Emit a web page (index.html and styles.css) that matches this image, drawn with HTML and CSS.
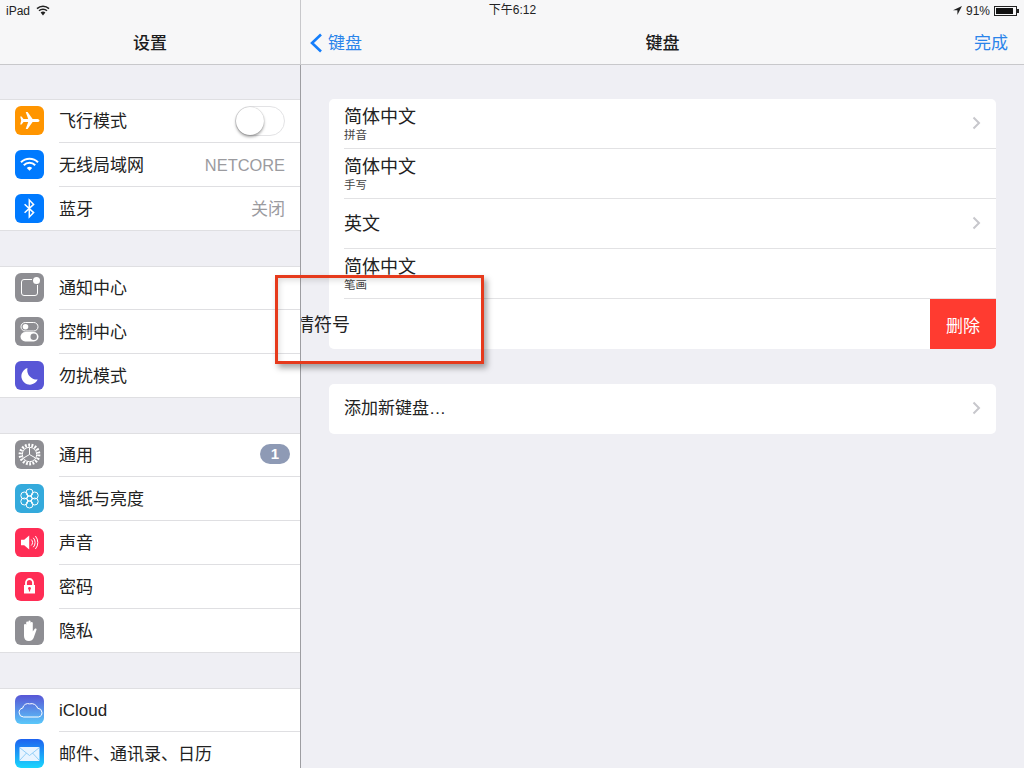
FILE: index.html
```html
<!DOCTYPE html>
<html lang="zh-CN">
<head>
<meta charset="utf-8">
<title>键盘</title>
<link rel="stylesheet" href="styles.css">
</head>
<body>
<div class="ipad">
  <div class="status">
    <div class="status-left">iPad
      <svg class="st-wifi" width="14" height="11" viewBox="0 0 14 11"><path d="M1 3.600a8.600 8.600 0 0 1 12 0M3 5.800a5.700 5.700 0 0 1 8 0" fill="none" stroke="#222" stroke-width="1.500"/><path d="M4.600 7.600a3.400 3.400 0 0 1 4.800 0L7 10.400z" fill="#222"/></svg>
    </div>
    <div class="status-time">下午6:12</div>
    <div class="status-right">
      <svg width="9" height="9" viewBox="0 0 9 9"><path d="M9 0 0 4.300h4.400V9z" fill="#222"/></svg>
      <span>91%</span>
      <span class="battery"><span class="battery-fill"></span></span>
      <span class="battery-tip"></span>
    </div>
  </div>

  <aside class="sidebar">
    <header class="bar side-bar"><h1 class="bar-title">设置</h1></header>
    <div class="side-scroll">
      <section class="group">
        <div class="row">
          <span class="icon c-orange"><svg viewBox="0 0 29 29"><path d="M24.500 14.500c0-1-1.200-1.600-2.600-1.600h-4.300L12.600 6h-1.900l2.500 6.900H8.500L6.600 10.600H5.200l1 3.900-1 3.900h1.400l1.900-2.300h4.700l-2.500 6.900h1.900l5-6.900h4.300c1.400 0 2.600-.6 2.600-1.600z" fill="#fff"/></svg></span>
          <span class="label">飞行模式</span>
          <span class="switch"><span class="knob"></span></span>
        </div>
        <div class="row">
          <span class="icon c-blue"><svg viewBox="0 0 29 29"><path d="M6 12.200a12 12 0 0 1 17 0M8.800 15.200a8 8 0 0 1 11.400 0" fill="none" stroke="#fff" stroke-width="2"/><path d="M11.800 18a4 4 0 0 1 5.400 0l-2.700 2.800z" fill="#fff"/></svg></span>
          <span class="label">无线局域网</span>
          <span class="value value-latin">NETCORE</span>
        </div>
        <div class="row">
          <span class="icon c-blue"><svg viewBox="0 0 29 29"><path d="M9.600 10.200 18.600 18.600 14.300 23V6l4.300 4.400-9 8.400" fill="none" stroke="#fff" stroke-width="1.500"/></svg></span>
          <span class="label">蓝牙</span>
          <span class="value value-cjk">关闭</span>
        </div>
      </section>

      <section class="group">
        <div class="row">
          <span class="icon c-gray"><svg viewBox="0 0 29 29"><path d="M17 6.500H9A2.500 2.500 0 0 0 6.500 9v11A2.500 2.500 0 0 0 9 22.500h11a2.500 2.500 0 0 0 2.500-2.500v-8" fill="none" stroke="#fff" stroke-width="1"/><circle cx="21.500" cy="7.500" r="3.500" fill="#fff"/></svg></span>
          <span class="label">通知中心</span>
        </div>
        <div class="row">
          <span class="icon c-gray"><svg viewBox="0 0 29 29"><rect x="6" y="5.500" width="17" height="8.500" rx="4.250" fill="none" stroke="#fff" stroke-width="1"/><circle cx="10.500" cy="9.750" r="2.800" fill="#fff"/><rect x="5.500" y="15" width="18" height="9.500" rx="4.750" fill="#fff"/><circle cx="18.700" cy="19.750" r="3.200" fill="#8e8e93"/></svg></span>
          <span class="label">控制中心</span>
        </div>
        <div class="row">
          <span class="icon c-purple"><svg viewBox="0 0 29 29"><path d="M12.500 7a8.500 8.500 0 1 0 10.200 11.500A9.500 9.500 0 0 1 12.500 7z" fill="#fff"/></svg></span>
          <span class="label">勿扰模式</span>
        </div>
      </section>

      <section class="group">
        <div class="row">
          <span class="icon c-gray"><svg viewBox="0 0 29 29"><circle cx="14.500" cy="14.500" r="9.300" fill="none" stroke="#fff" stroke-width="3.200" stroke-dasharray="1.800 1.450"/><circle cx="14.500" cy="14.500" r="7.200" fill="none" stroke="#fff" stroke-width="1"/><path d="M14.500 14.500V7.500M14.500 14.500 8.500 18M14.500 14.500 20.500 18" stroke="#fff" stroke-width="1" fill="none"/></svg></span>
          <span class="label">通用</span>
          <span class="badge">1</span>
        </div>
        <div class="row">
          <span class="icon c-teal"><svg viewBox="0 0 29 29"><g fill="none" stroke="#fff" stroke-width="1"><circle cx="14.500" cy="8.500" r="3.500"/><circle cx="14.500" cy="20.500" r="3.500"/><circle cx="9.300" cy="11.500" r="3.500"/><circle cx="19.700" cy="17.500" r="3.500"/><circle cx="9.300" cy="17.500" r="3.500"/><circle cx="19.700" cy="11.500" r="3.500"/><circle cx="14.500" cy="14.500" r="2.500"/></g></svg></span>
          <span class="label">墙纸与亮度</span>
        </div>
        <div class="row">
          <span class="icon c-pink"><svg viewBox="0 0 29 29"><path d="M6 11.800h3.200l5-4.300v14l-5-4.300H6z" fill="#fff"/><path d="M16.200 11.500a4 4 0 0 1 0 6M18.300 9.800a7 7 0 0 1 0 9.400M20.400 8a10 10 0 0 1 0 13" fill="none" stroke="#fff" stroke-width="1"/></svg></span>
          <span class="label">声音</span>
        </div>
        <div class="row">
          <span class="icon c-pink"><svg viewBox="0 0 29 29"><path d="M11 13V10.500a3.500 3.500 0 0 1 7 0V13" fill="none" stroke="#fff" stroke-width="1.800"/><path d="M9 13h11v8.500H9z" fill="#fff"/><circle cx="14.500" cy="16.500" r="1.400" fill="#ff2d55"/><path d="M13.900 17h1.200v2.500h-1.200z" fill="#ff2d55"/></svg></span>
          <span class="label">密码</span>
        </div>
        <div class="row">
          <span class="icon c-gray"><svg viewBox="0 0 29 29"><path d="M9 15.500V9a1.100 1.100 0 0 1 2.200 0v4.500V6.500a1.100 1.100 0 0 1 2.200 0v7V5.500a1.100 1.100 0 0 1 2.200 0v8V7a1.100 1.100 0 0 1 2.200 0v8.500l1.800-2.600c.8-1.100 2.500-.3 1.900.9L18.600 22c-.9 2-2.400 3-4.600 3-3.300 0-5-2-5-5z" fill="#fff"/></svg></span>
          <span class="label">隐私</span>
        </div>
      </section>

      <section class="group">
        <div class="row">
          <span class="icon c-cloud"><svg viewBox="0 0 29 29"><path d="M8.500 22a4.500 4.500 0 0 1-.8-8.900 5.300 5.300 0 0 1 7-4.200 6.400 6.400 0 0 1 8 4.400 4.400 4.400 0 0 1 .8 8.700z" fill="none" stroke="#fff" stroke-width="1"/></svg></span>
          <span class="label">iCloud</span>
        </div>
        <div class="row">
          <span class="icon c-mail"><svg viewBox="0 0 29 29"><rect x="4.500" y="8" width="20" height="14" rx="1" fill="#e8f4ff"/><path d="M4.500 8.500 14.500 16.500 24.500 8.500M4.500 21.500 11.500 14M24.500 21.500 17.500 14" fill="none" stroke="#7cc4f5" stroke-width="0.800"/></svg></span>
          <span class="label">邮件、通讯录、日历</span>
        </div>
      </section>
    </div>
  </aside>

  <main class="main">
    <header class="bar main-bar">
      <a class="back">
        <svg class="back-chev" width="14" height="20" viewBox="0 0 14 20"><path d="M12 1.500 3 10l9 8.500" fill="none" stroke="#147efb" stroke-width="2.600"/></svg>
        <span>键盘</span>
      </a>
      <h1 class="bar-title">键盘</h1>
      <a class="done">完成</a>
    </header>
    <div class="content">
      <section class="card">
        <div class="kb-row">
          <div class="kb-text"><div class="kb-name">简体中文</div><div class="kb-sub">拼音</div></div>
          <svg class="chev" width="9" height="14" viewBox="0 0 9 14"><path d="M1.500 1.500 7 7l-5.500 5.500" fill="none" stroke="#c7c7cc" stroke-width="2"/></svg>
        </div>
        <div class="kb-row">
          <div class="kb-text"><div class="kb-name">简体中文</div><div class="kb-sub">手写</div></div>
        </div>
        <div class="kb-row">
          <div class="kb-text"><div class="kb-name">英文</div></div>
          <svg class="chev" width="9" height="14" viewBox="0 0 9 14"><path d="M1.500 1.500 7 7l-5.500 5.500" fill="none" stroke="#c7c7cc" stroke-width="2"/></svg>
        </div>
        <div class="kb-row">
          <div class="kb-text"><div class="kb-name">简体中文</div><div class="kb-sub">笔画</div></div>
        </div>
        <div class="kb-row swiped">
          <div class="kb-name swiped-name">表情符号</div>
          <div class="delete">删除</div>
        </div>
      </section>
      <section class="card">
        <div class="kb-row add">
          <div class="add-label">添加新键盘…</div>
          <svg class="chev" width="9" height="14" viewBox="0 0 9 14"><path d="M1.500 1.500 7 7l-5.500 5.500" fill="none" stroke="#c7c7cc" stroke-width="2"/></svg>
        </div>
      </section>
    </div>
  </main>

  <div class="annotation"></div>
</div>
</body>
</html>
```
FILE: styles.css
```css
* { box-sizing: border-box; }
html, body { margin: 0; padding: 0; }
body {
  width: 1024px;
  height: 768px;
  overflow: hidden;
  font-family: "Liberation Sans", "Noto Sans CJK SC", sans-serif;
  color: #222;
  background: #efeff4;
}
.ipad {
  position: relative;
  display: flex;
  width: 1024px;
  height: 768px;
  overflow: hidden;
}
.status {
  position: absolute;
  top: 0;
  left: 0;
  right: 0;
  height: 20px;
  display: grid;
  grid-template-columns: 1fr auto 1fr;
  align-items: center;
  padding: 0 5px 0 6px;
  font-size: 12px;
  color: #222;
  z-index: 2;
}
.status-left { display: flex; align-items: center; gap: 6px; padding-top: 1px; }
.status-time { text-align: center; line-height: 16px; padding-bottom: 0; }
.status-right { display: flex; align-items: center; justify-content: flex-end; gap: 4px; padding-top: 1px; }
.battery {
  display: block;
  width: 23px;
  height: 10px;
  border: 1px solid #222;
  padding: 1px;
  margin-right: -4px;
}
.battery-fill { display: block; width: 92%; height: 100%; background: #111; }
.battery-tip { display: block; width: 2px; height: 4px; background: #222; }
.bar {
  height: 65px;
  flex: none;
  padding-top: 18px;
  background: #f7f7f8;
  border-bottom: 1px solid #c8c8cb;
  display: flex;
  align-items: center;
  justify-content: center;
}
.side-bar { border-right: 1px solid #c8c8cb; }
.bar-title {
  margin: 0;
  font-size: 17px;
  font-weight: 500;
  color: #1c1c1c;
}
.sidebar {
  width: 301px;
  flex: none;
  display: flex;
  flex-direction: column;
  background: #efeff4;
}
.side-scroll {
  flex: 1;
  overflow: hidden;
  padding-top: 34px;
  border-right: 1px solid #9d9da1;
}
.group {
  background: #fff;
  box-shadow: inset 0 1px #dfdfe2, inset 0 -1px #dfdfe2;
  margin-bottom: 35px;
}
.row {
  position: relative;
  height: 44px;
  display: flex;
  align-items: center;
  padding: 0 15px;
  font-size: 17px;
  line-height: 20px;
}
.row + .row::before {
  content: "";
  position: absolute;
  top: -1px;
  left: 59px;
  right: 0;
  height: 1px;
  background: #dfdfe2;
}
.icon {
  width: 29px;
  height: 29px;
  border-radius: 6px;
  flex: none;
  margin-right: 15px;
  margin-bottom: 1px;
  display: block;
}
.icon svg { display: block; width: 29px; height: 29px; }
.c-orange { background: #ff9500; }
.c-blue { background: #007aff; }
.c-gray { background: #8e8e93; }
.c-purple { background: #5856d6; }
.c-teal { background: #34aadc; }
.c-pink { background: #ff2d55; }
.c-cloud { background: linear-gradient(#5856d6, #5ac8fa); }
.c-mail { background: linear-gradient(#1d62f0, #1ad6fd); }
.label { flex: 1; color: #222; padding-top: 2px; }
.value { color: #9b9b9f; font-size: 17px; }
.value-latin { font-size: 16.4px; }
.value-cjk { padding-top: 2px; }
.switch {
  position: relative;
  width: 50px;
  height: 30px;
  border: 1px solid #e3e3e5;
  border-radius: 15px;
  background: #fff;
}
.knob {
  position: absolute;
  top: 0;
  left: 0;
  width: 28px;
  height: 28px;
  border-radius: 50%;
  background: #fff;
  box-shadow: 0 2px 3px rgba(0,0,0,.35), 0 0 1px rgba(0,0,0,.3);
}
.badge {
  width: 30px;
  height: 20px;
  margin-right: -5px;
  margin-top: -2px;
  border-radius: 10px;
  background: #8e9ab5;
  color: #fff;
  font-size: 15px;
  font-weight: 700;
  line-height: 20px;
  text-align: center;
}
.main {
  flex: 1;
  min-width: 0;
  overflow: hidden;
  display: flex;
  flex-direction: column;
}
.main-bar {
  justify-content: space-between;
  padding-left: 8px;
  padding-right: 16px;
}
.main-bar .bar-title {
  position: absolute;
  left: 301px;
  right: 0;
  text-align: center;
  pointer-events: none;
}
.back, .done { color: #2a84ea; font-size: 17px; display: flex; align-items: center; gap: 5px; }
.back-chev { margin-top: 3px; }
.content { padding: 34px 28px 0 28px; }
.card {
  background: #fff;
  border-radius: 5px;
  margin-bottom: 35px;
  width: 667px;
}
.kb-row {
  position: relative;
  height: 50px;
  display: flex;
  align-items: center;
  justify-content: space-between;
  padding: 0 15px 0 15px;
}
.kb-row + .kb-row::before {
  content: "";
  position: absolute;
  top: -1px;
  left: 15px;
  right: 0;
  height: 1px;
  background: #e2e2e4;
}
.kb-text { display: flex; flex-direction: column; }
.kb-name { font-size: 18px; line-height: 22px; color: #222; }
.kb-sub { font-size: 11.500px; line-height: 13px; color: #444; margin-top: 1px; padding-bottom: 1px; }
.chev { flex: none; margin-bottom: 2px; }
.swiped { padding-right: 0; }
.swiped-name { margin-left: -66px; margin-top: 2px; }
.delete {
  position: absolute;
  right: 0;
  top: 0;
  bottom: 0;
  width: 66px;
  display: flex;
  align-items: center;
  justify-content: center;
  background: #ff3b30;
  color: #fff;
  font-size: 17px;
  border-bottom-right-radius: 5px;
}
.add-label { font-size: 17px; line-height: 20px; margin-bottom: 1px; color: #222; }
.annotation {
  position: absolute;
  left: 275px;
  top: 275px;
  width: 209px;
  height: 89px;
  border: 3px solid #e63a1c;
  box-shadow: 3px 4px 6px rgba(0,0,0,.35), inset 3px 4px 6px -2px rgba(0,0,0,.15);
  z-index: 3;
}
```
